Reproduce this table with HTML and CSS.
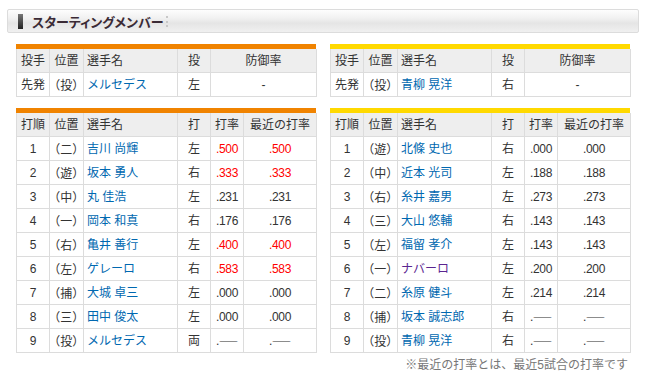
FILE: index.html
```html
<!DOCTYPE html>
<html lang="ja">
<head>
<meta charset="utf-8">
<link rel="stylesheet" href="styles.css">
</head>
<body>
<div class="page">
  <div class="head">
    <span class="mark"></span>
    <span class="title">スターティングメンバー</span>
    <span class="sep"></span>
  </div>
  <div class="cols">
    <div class="col">
      <div class="bar orange"></div>
      <table>
        <colgroup><col class="c1"><col class="c2"><col class="c3"><col class="c4"><col class="c5p"></colgroup>
        <thead><tr><th>投手</th><th>位置</th><th class="l">選手名</th><th>投</th><th>防御率</th></tr></thead>
        <tbody><tr><td>先発</td><td class="p">（投）</td><td class="l"><span class="nm">メルセデス</span></td><td>左</td><td>-</td></tr></tbody>
      </table>
      <div class="bar orange gap"></div>
      <table>
        <colgroup><col class="c1"><col class="c2"><col class="c3"><col class="c4"><col class="c5"><col class="c6"></colgroup>
        <thead><tr><th>打順</th><th>位置</th><th class="l">選手名</th><th>打</th><th>打率</th><th>最近の打率</th></tr></thead>
        <tbody>
          <tr><td>1</td><td class="p">（二）</td><td class="l"><span class="nm">吉川 尚輝</span></td><td>左</td><td class="n red">.500</td><td class="n red">.500</td></tr>
          <tr><td>2</td><td class="p">（遊）</td><td class="l"><span class="nm">坂本 勇人</span></td><td>右</td><td class="n red">.333</td><td class="n red">.333</td></tr>
          <tr><td>3</td><td class="p">（中）</td><td class="l"><span class="nm">丸 佳浩</span></td><td>左</td><td class="n">.231</td><td class="n">.231</td></tr>
          <tr><td>4</td><td class="p">（一）</td><td class="l"><span class="nm">岡本 和真</span></td><td>右</td><td class="n">.176</td><td class="n">.176</td></tr>
          <tr><td>5</td><td class="p">（右）</td><td class="l"><span class="nm">亀井 善行</span></td><td>左</td><td class="n red">.400</td><td class="n red">.400</td></tr>
          <tr><td>6</td><td class="p">（左）</td><td class="l"><span class="nm">ゲレーロ</span></td><td>右</td><td class="n red">.583</td><td class="n red">.583</td></tr>
          <tr><td>7</td><td class="p">（捕）</td><td class="l"><span class="nm">大城 卓三</span></td><td>左</td><td class="n">.000</td><td class="n">.000</td></tr>
          <tr><td>8</td><td class="p">（三）</td><td class="l"><span class="nm">田中 俊太</span></td><td>左</td><td class="n">.000</td><td class="n">.000</td></tr>
          <tr><td>9</td><td class="p">（投）</td><td class="l"><span class="nm">メルセデス</span></td><td>両</td><td class="n">.<span class="dash">――</span></td><td class="n">.<span class="dash">――</span></td></tr>
        </tbody>
      </table>
    </div>
    <div class="col">
      <div class="bar yellow"></div>
      <table>
        <colgroup><col class="c1"><col class="c2"><col class="c3"><col class="c4"><col class="c5p"></colgroup>
        <thead><tr><th>投手</th><th>位置</th><th class="l">選手名</th><th>投</th><th>防御率</th></tr></thead>
        <tbody><tr><td>先発</td><td class="p">（投）</td><td class="l"><span class="nm">青柳 晃洋</span></td><td>右</td><td>-</td></tr></tbody>
      </table>
      <div class="bar yellow gap"></div>
      <table>
        <colgroup><col class="c1"><col class="c2"><col class="c3"><col class="c4"><col class="c5"><col class="c6"></colgroup>
        <thead><tr><th>打順</th><th>位置</th><th class="l">選手名</th><th>打</th><th>打率</th><th>最近の打率</th></tr></thead>
        <tbody>
          <tr><td>1</td><td class="p">（遊）</td><td class="l"><span class="nm">北條 史也</span></td><td>右</td><td class="n">.000</td><td class="n">.000</td></tr>
          <tr><td>2</td><td class="p">（中）</td><td class="l"><span class="nm">近本 光司</span></td><td>左</td><td class="n">.188</td><td class="n">.188</td></tr>
          <tr><td>3</td><td class="p">（右）</td><td class="l"><span class="nm">糸井 嘉男</span></td><td>左</td><td class="n">.273</td><td class="n">.273</td></tr>
          <tr><td>4</td><td class="p">（三）</td><td class="l"><span class="nm">大山 悠輔</span></td><td>右</td><td class="n">.143</td><td class="n">.143</td></tr>
          <tr><td>5</td><td class="p">（左）</td><td class="l"><span class="nm">福留 孝介</span></td><td>左</td><td class="n">.143</td><td class="n">.143</td></tr>
          <tr><td>6</td><td class="p">（一）</td><td class="l"><span class="nm visited">ナバーロ</span></td><td>左</td><td class="n">.200</td><td class="n">.200</td></tr>
          <tr><td>7</td><td class="p">（二）</td><td class="l"><span class="nm">糸原 健斗</span></td><td>左</td><td class="n">.214</td><td class="n">.214</td></tr>
          <tr><td>8</td><td class="p">（捕）</td><td class="l"><span class="nm">坂本 誠志郎</span></td><td>右</td><td class="n">.<span class="dash">――</span></td><td class="n">.<span class="dash">――</span></td></tr>
          <tr><td>9</td><td class="p">（投）</td><td class="l"><span class="nm">青柳 晃洋</span></td><td>右</td><td class="n">.<span class="dash">――</span></td><td class="n">.<span class="dash">――</span></td></tr>
        </tbody>
      </table>
      <p class="note">※最近の打率とは、最近5試合の打率です</p>
    </div>
  </div>
</div>
</body>
</html>
```
FILE: styles.css
```css
* { box-sizing: border-box; }
html, body { margin: 0; padding: 0; background: #fff; }
body {
  font-family: "Liberation Sans", "Noto Sans CJK JP", sans-serif;
  font-size: 12px;
  color: #333;
}
.page { padding: 9px 9px 0 7px; }
.head {
  height: 24px;
  border: 1px solid #dcdcdc;
  border-radius: 2px;
  background: linear-gradient(#fdfdfd 0%, #f2f2f2 35%, #e5e5e5 60%, #f0f0f0 100%);
  display: flex;
  align-items: center;
  padding-left: 10px;
}
.mark {
  width: 5px;
  height: 15px;
  background: linear-gradient(#777, #222);
  margin-right: 9px;
}
.title {
  font-family: "Noto Sans CJK JP", sans-serif;
  font-weight: bold;
  font-size: 13px;
  color: #3a2a35;
  font-feature-settings: "palt";
  line-height: 1;
}
.sep {
  width: 0;
  height: 11px;
  border-left: 2px dotted #c8c8c8;
  margin-left: 3px;
}
.cols {
  display: flex;
  gap: 14px;
  padding: 11px 0 0 9px;
}
.col { width: 300px; }
.bar { height: 5px; }
.bar.gap { margin-top: 11px; }
.orange { background: #f08300; }
.yellow { background: #ffd900; }
table {
  width: 300px;
  border-collapse: collapse;
  table-layout: fixed;
}
.c1 { width: 33px; }
.c2 { width: 34px; }
.c3 { width: 94px; }
.c4 { width: 33px; }
.c5 { width: 33px; }
.c6 { width: 73px; }
.c5p { width: 106px; }
th, td {
  border: 1px solid #dcdcdc;
  padding: 1px 0 0;
  height: 23px;
  line-height: 22px;
  text-align: center;
  font-weight: normal;
  white-space: nowrap;
  overflow: hidden;
}
thead th { border-top: 0; background: #eee; }
.l { text-align: left; padding-left: 3px; }
.p { font-feature-settings: "palt"; font-family: "Noto Sans CJK JP", sans-serif; letter-spacing: 0.5px; }
.nm { color: #0068b0; }
.nm.visited { color: #5a2590; }
.n { letter-spacing: -0.3px; }
.dash { font-family: "Noto Sans CJK JP", sans-serif; font-size: 9.5px; letter-spacing: 0; }
.red { color: #f00; }
.note {
  margin: 4px 2px 0 0;
  text-align: right;
  color: #777;
  font-size: 12px;
  line-height: 16px;
}
```
